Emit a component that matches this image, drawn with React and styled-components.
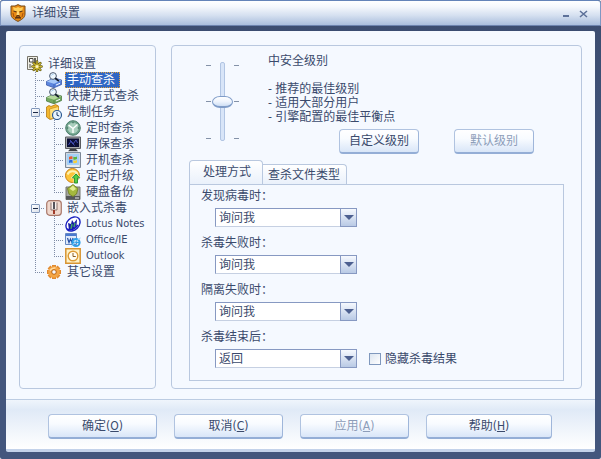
import { useState } from "react";
import styled, { createGlobalStyle, css } from "styled-components";

const GlobalStyle = createGlobalStyle`
	* {
		box-sizing: border-box;
	}

	body {
		margin: 0;
	}

	body, button, select, input {
		font-family: "DejaVu Sans Condensed", "Noto Sans CJK SC", sans-serif;
		font-size: 12px;
		line-height: 14px;
		color: #3a4a6c;
	}
`;

const Window = styled.div`
	display: flex;
	flex-direction: column;
	min-height: 100vh;
	background: linear-gradient(#3a4b6e, #43567d 40%);
	border-radius: 3px 3px 2px 2px;
	overflow: hidden;
`;

const TitleBar = styled.header`
	display: flex;
	align-items: center;
	height: 26px;
	padding: 0 10px 0 9px;
	gap: 6px;
	border: 1px solid #7f97c2;
	border-top-color: #6483b8;
	border-bottom-color: #6c83ae;
	border-radius: 3px 3px 0 0;
	background: linear-gradient(#ffffff 0%, #f4f7fc 25%, #d5e0f0 60%, #a9bddc 100%);
`;

const Title = styled.h1`
	flex: 1;
	margin: 0;
	font-size: 12px;
	font-weight: normal;
`;

const WindowButton = styled.button`
	display: flex;
	width: 12px;
	height: 12px;
	padding: 0;
	border: 0;
	background: none;
`;

const Body = styled.div`
	flex: 1;
	display: flex;
	flex-direction: column;
	margin: 5px 6px 7px;
	border-bottom: 3px solid #c3d2ea;
	border-radius: 2px;
	background: #f5f9ff;
`;

const Main = styled.main`
	flex: 1;
	display: grid;
	grid-template-columns: 137px 1fr;
	gap: 15px;
	padding: 14px 13px 10px;
`;

const Panel = styled.section`
	display: flex;
	flex-direction: column;
	border: 1px solid #b9c8df;
	border-radius: 4px;
`;

const Tree = styled.ul`
	margin: 0;
	padding: 10px 0 0 6px;
	list-style: none;
`;

const TreeRow = styled.li`
	display: flex;
	align-items: center;
	height: 16px;
`;

const dots = dir => `repeating-linear-gradient(${dir}, #7f8ca6 0 1px, transparent 1px 2px)`;

const guides = {
	line: css`
		background: ${dots("to bottom")} 9px 0 / 1px 16px no-repeat;
	`,
	tee: css`
		background: ${dots("to bottom")} 9px 0 / 1px 16px no-repeat,
			${dots("to right")} 9px 8px / 10px 1px no-repeat;
	`,
	end: css`
		background: ${dots("to bottom")} 9px 0 / 1px 8px no-repeat,
			${dots("to right")} 9px 8px / 10px 1px no-repeat;
	`,
};

const Guide = styled.span`
	display: flex;
	align-items: center;
	justify-content: center;
	width: 19px;
	height: 16px;
	${({ $kind }) => guides[$kind]}
`;

const Expander = styled.button`
	display: flex;
	align-items: center;
	justify-content: center;
	width: 9px;
	height: 9px;
	padding: 0;
	border: 1px solid #8298bb;
	border-radius: 1px;
	background: linear-gradient(135deg, #ffffff, #d9e0ea);

	&::after {
		content: "";
		width: 5px;
		height: 1px;
		background: #1c2a48;
	}
`;

const TreeIcon = styled.svg`
	width: 16px;
	height: 16px;
	margin: 0 3px 0 1px;
	flex: none;
`;

const TreeLabel = styled.button`
	height: 16px;
	padding: 0 4px 0 1px;
	border: 1px dotted transparent;
	background: none;
	line-height: 14px;
	white-space: nowrap;
	${({ $latin }) => $latin && "font-size: 11px;"}
	${({ $selected }) =>
		$selected &&
		css`
			border-color: #e0a040;
			background: #2f66c4;
			color: #ffffff;
		`}
`;

const LevelArea = styled.div`
	display: flex;
	padding: 8px 47px 0 34px;
	gap: 29px;
`;

const SliderBox = styled.div`
	display: flex;
	align-items: center;
	height: 79px;
	margin-top: 8px;
	gap: 4px;
`;

const Ticks = styled.div`
	display: flex;
	flex-direction: column;
	justify-content: space-between;
	height: 74px;
`;

const Tick = styled.span`
	width: 5px;
	height: 1px;
	background: #8492a8;
`;

const LevelSlider = styled.input`
	appearance: none;
	writing-mode: vertical-lr;
	width: 21px;
	height: 79px;
	margin: 0 -3px;
	background: none;

	&::-webkit-slider-runnable-track {
		width: 5px;
		height: 79px;
		border: 1px solid #b1c5e3;
		border-radius: 2px;
		background: #d8e5f8;
	}

	&::-webkit-slider-thumb {
		appearance: none;
		width: 21px;
		height: 12px;
		margin-left: -9px;
		border: 1px solid #7f9cc8;
		border-bottom-width: 2px;
		border-radius: 8px / 6px;
		background: linear-gradient(#ffffff, #eef4fd 50%, #cfdff4);
	}
`;

const LevelInfo = styled.div`
	flex: 1;
	display: flex;
	flex-direction: column;
`;

const LevelName = styled.h2`
	margin: 0 0 14px;
	font-size: 12px;
	font-weight: normal;
`;

const LevelNotes = styled.ul`
	margin: 0;
	padding: 0;
	list-style: none;
`;

const Button = styled.button`
	width: ${({ $width }) => $width || 80}px;
	height: 25px;
	padding: 0;
	border: 1px solid #b0c3e0;
	border-bottom: 2px solid #94aed6;
	border-right-color: #9fb6da;
	border-radius: 4px;
	background: linear-gradient(#ffffff 0%, #f8fbff 40%, #d9e6f8 100%);

	&:disabled {
		color: #8d9db9;
	}
`;

const LevelButtons = styled.div`
	display: flex;
	justify-content: flex-end;
	margin-top: 5px;
	gap: 35px;
`;

const TabArea = styled.div`
	flex: 1;
	display: flex;
	flex-direction: column;
	margin: 6px 17px 7px;
`;

const TabList = styled.div`
	display: flex;
	align-items: flex-end;
	height: 24px;
`;

const Tab = styled.button`
	height: 20px;
	padding: 0 6px 0 5px;
	border: 1px solid #b9c8df;
	border-bottom: 0;
	border-left: 0;
	border-radius: 0 4px 0 0;
	background: linear-gradient(#ffffff, #eaf1fb);
	${({ $active }) =>
		$active &&
		css`
			height: 24px;
			padding: 0 11px 2px 13px;
			border-left: 1px solid #b9c8df;
			border-radius: 4px 4px 0 0;
		`}
`;

const TabPanel = styled.div`
	flex: 1;
	padding: 4px 11px 12px;
	border: 1px solid #b9c8df;
`;

const Field = styled.div`
	display: flex;
	flex-direction: column;
	gap: 5px;
	margin-bottom: 9px;

	&:last-child {
		margin-bottom: 0;
	}
`;

const FieldRow = styled.div`
	display: flex;
	align-items: center;
	gap: 12px;
	margin-left: 14px;
`;

const SelectBox = styled.div`
	display: grid;
	grid-template-columns: 1fr 17px;
	width: 142px;
	height: 19px;
`;

const Select = styled.select`
	appearance: none;
	grid-area: 1 / 1 / 2 / 3;
	padding: 0 20px 0 3px;
	border: 1px solid #8799c2;
	border-bottom-color: #c6d0e2;
	border-radius: 0;
	background: #ffffff;
`;

const SelectArrow = styled.span`
	grid-area: 1 / 2 / 2 / 3;
	display: flex;
	align-items: center;
	justify-content: center;
	border: 1px solid #8799c2;
	background: linear-gradient(#f6f9fe, #b9cae5);
	pointer-events: none;

	&::after {
		content: "";
		border: 5px solid transparent;
		border-top-color: #4d6090;
		border-bottom: 0;
	}
`;

const CheckLabel = styled.label`
	display: flex;
	align-items: center;
	gap: 4px;
`;

const Checkbox = styled.input`
	appearance: none;
	width: 12px;
	height: 12px;
	margin: 0;
	border: 1px solid #7f98bd;
	background: linear-gradient(135deg, #dce5f0, #ffffff);

	&:checked {
		background: #5f7db0;
	}
`;

const Footer = styled.footer`
	display: flex;
	justify-content: center;
	gap: 17px;
	padding: 14px 14px 10px 13px;
	border-top: 1px solid #bccce2;
	background: linear-gradient(#eff5fc, #e0eaf7 20%, #ffffff);
`;

const ShieldLogo = () => (
	<svg width="16" height="18" viewBox="0 0 16 18" aria-hidden="true">
		<path d="M1 2 L5 2 L8 .6 L11 2 L15 2 V10 C15 14 11 16 8 17.4 C5 16 1 14 1 10 Z" fill="#e78a14" stroke="#774a18" />
		<path d="M3 3 L6 4 L8 3 L10 4 L13 3 L12 8 L10 7 L8 8.500 L6 7 L4 8 Z" fill="#ffcf58" />
		<path d="M3.500 7 L6.500 8 M9.500 8 L12.500 7 M6 12.500 L8 11.500 L10 12.500 M5 14 L8 13.500 L11 14" stroke="#5b3211" strokeWidth="1.300" fill="none" />
		<path d="M7 8 H9 L9.500 11 H6.500 Z" fill="#ffd978" />
		<path d="M3 9 L4 13 M13 9 L12 13" stroke="#a7500e" />
	</svg>
);

const Disk = ({ light, mid, dark }) => (
	<>
		<path d="M.4 9.500 L8 6 L15.600 8 V12.500 L8 15.800 L.4 13 Z" fill={mid} stroke={dark} strokeWidth=".7" />
		<path d="M.7 9.500 L8 6.300 L15.300 8.200 L8 11.800 Z" fill={light} />
		<path d="M8 12 V15.300" stroke={dark} strokeWidth=".6" />
		<path d="M10 13 L14 11.300" stroke="#f5faff" />
		<circle cx="7" cy="4" r="3.400" fill="#eef8ff" stroke="#4d5b72" />
		<path d="M5.200 3.600 Q6 2.200 7.500 2.200" stroke="#9fc9ef" fill="none" />
		<path d="M9.500 6.500 L12.500 8.700" stroke="#18202f" strokeWidth="1.700" strokeLinecap="round" />
	</>
);

const icons = {
	settings: (
		<>
			<path d="M.5 .5 H10.500 V13.500 H.5 Z" fill="#f0efe6" stroke="#77746a" />
			<path d="M2.500 2.500 H6 V6 H2.500 Z M3 8 V12" fill="#ffffff" stroke="#4a4a45" />
			<path d="M8 2 V7" stroke="#33332d" strokeWidth="1.500" />
			<g stroke="#5c5412" strokeWidth="2.600" strokeLinecap="round">
				<path d="M10 5.500 V15 M5.500 10.500 H14.500 M6.700 7.200 L13.300 13.800 M13.300 7.200 L6.700 13.800" />
			</g>
			<g stroke="#c9b52e" strokeWidth="1.400" strokeLinecap="round">
				<path d="M10 5.500 V15 M5.500 10.500 H14.500 M6.700 7.200 L13.300 13.800 M13.300 7.200 L6.700 13.800" />
			</g>
			<circle cx="10" cy="10.500" r="1.500" fill="#fbf5c3" />
		</>
	),
	manual: <Disk light="#a6c8f8" mid="#5c86de" dark="#2c4a9e" />,
	quick: <Disk light="#b4d89c" mid="#72a860" dark="#3c6d34" />,
	tasks: (
		<>
			<path d="M.5 3 L3 1.500 L5 2.500 L9.500 .6 L12.500 2 V13 L4 15.500 L.5 13 Z" fill="#f4b72e" stroke="#b47a12" strokeWidth=".8" />
			<path d="M3.500 5 L12.500 2.500 V12.500 L4 15.200 Z" fill="#ffe07a" stroke="#c78d1b" strokeWidth=".7" />
			<circle cx="11" cy="11" r="4.500" fill="#e7f4ff" stroke="#2d5a94" strokeWidth="1.200" />
			<path d="M11 8.200 V11.200 L13.200 12" stroke="#1f3b66" fill="none" />
		</>
	),
	timed: (
		<>
			<circle cx="8" cy="8" r="7.300" fill="#72a58e" stroke="#4c7e6b" />
			<circle cx="8" cy="8" r="5.400" fill="#a9cfbd" />
			<path d="M8 8.500 L3.500 5 M8 8.500 L12.500 4.500 M8 8.500 V13" stroke="#ffffff" strokeWidth="1.400" />
			<path d="M8 1.800 V3.300 M14.200 8 H12.700 M3.300 8 H1.800" stroke="#2e5c4c" />
		</>
	),
	screen: (
		<>
			<path d="M.5 1 H15.500 V12.500 H.5 Z" fill="#a7a9ac" stroke="#5a5c60" />
			<path d="M2 2.500 H14 V11 H2 Z" fill="#0b0e35" />
			<path d="M3.500 9 L6 5 L8 8 L11 4 L12.500 7 M5 4 L9.500 9.500" stroke="#4450b8" fill="none" />
			<path d="M5 13 H11 L13 15.300 H3 Z" fill="#3f4146" />
		</>
	),
	boot: (
		<>
			<path d="M.5 .5 H15.500 V15.500 H.5 Z" fill="#cfd8e2" stroke="#7b8796" />
			<path d="M2 2 H14 V13 H2 Z" fill="#a5d0f6" />
			<path d="M4 5 Q6 3.500 7.500 4.600 V7.300 Q6 6.500 4 7.700 Z" fill="#ea5b2e" />
			<path d="M8.300 4.800 Q10 5.500 12 4.400 V7 Q10 8.200 8.300 7.500 Z" fill="#5cb53c" />
			<path d="M4 8.500 Q6 7.300 7.500 8.200 V11 Q6 10 4 11 Z" fill="#2d68d4" />
			<path d="M8.300 8.300 Q10 9.200 12 8 V10.500 Q10 11.800 8.300 11 Z" fill="#f8cf37" />
			<path d="M2 14 H14" stroke="#ffffff" />
		</>
	),
	upgrade: (
		<>
			<circle cx="7.500" cy="7.500" r="7" fill="#fcc43a" stroke="#c97f11" />
			<path d="M2.500 6.500 A5.500 5 0 0 1 12.500 6" stroke="#fff2b0" strokeWidth="2" fill="none" />
			<path d="M11 5 L15.700 10 H13 V15.500 H9 V10 H6.300 Z" fill="#58cf43" stroke="#ffffff" strokeWidth=".6" />
			<path d="M11 6 L14.500 10 H12.500 V15 H9.500 V10 H7.500 Z" stroke="#218326" strokeWidth=".8" fill="none" />
		</>
	),
	backup: (
		<>
			<path d="M1 3 H15 V15.500 H1 Z" fill="#a3a59f" stroke="#74766f" />
			<path d="M1 12 L15 12 V15.500 H1 Z" fill="#55575a" />
			<path d="M10 14 H14" stroke="#e7e9ec" />
			<path d="M8 .5 L13 4.500 L11.500 10 L8 12.500 L4 10 L2.500 4.500 Z" fill="#a4b83e" stroke="#6d7c20" strokeWidth=".8" />
			<path d="M8 1.500 L11 5 L8 7 L4.500 4.800 Z" fill="#e3ed93" />
		</>
	),
	embedded: (
		<>
			<rect x=".7" y=".7" width="14.600" height="14.600" rx="3" fill="#f0d8cd" stroke="#a9786a" strokeWidth="1.200" />
			<path d="M5 2.500 V10 H11 V2.500" fill="#faf2ee" stroke="#8d736c" />
			<path d="M8 2 V9" stroke="#55535a" strokeWidth="2" />
			<path d="M8 10 V14" stroke="#a03a2a" strokeWidth="2" />
		</>
	),
	lotus: (
		<>
			<ellipse cx="8" cy="8" rx="8" ry="6" transform="rotate(-45 8 8)" fill="#ffffff" stroke="#1b22bf" strokeWidth="1.400" />
			<path d="M3 7 L6 8 L7 4 L9 7 L12 3 L11.500 10 L8 13 L4 14 Z" fill="#171da8" />
			<path d="M6 13 L7 8 M9 11 L10 7" stroke="#42a36c" strokeWidth="1.500" />
			<path d="M2 13 Q7 16 13 9" stroke="#1717c5" strokeWidth="1.600" fill="none" />
		</>
	),
	office: (
		<>
			<path d="M.5 1.500 H11.500 V12.500 H.5 Z" fill="#dfeafa" stroke="#6688c2" />
			<path d="M1 2 H11 V4 H1 Z" fill="#4a79cf" />
			<path d="M2.500 6 L4 10.500 L5.500 7 L7 10.500 L8 6" stroke="#264fa4" strokeWidth="1.200" fill="none" />
			<circle cx="11" cy="10.500" r="3.600" fill="none" stroke="#2f9fe8" strokeWidth="2" />
			<path d="M8 10.500 H14" stroke="#2f9fe8" strokeWidth="1.500" />
			<path d="M6.500 14.500 Q10 9 15.500 6" stroke="#8fd0f7" fill="none" />
		</>
	),
	outlook: (
		<>
			<path d="M.8 .8 H15.200 V15.200 H.8 Z" fill="#fff3c8" stroke="#d79432" strokeWidth="1.500" />
			<circle cx="8" cy="8" r="4.800" fill="#fffdf2" stroke="#dc9a35" strokeWidth="1.400" />
			<path d="M8 5 V8.500 H10.800" stroke="#8c5f26" fill="none" />
		</>
	),
	other: (
		<>
			<g stroke="#e08a30" strokeWidth="4">
				<path d="M8 1 V15 M1 8 H15 M3 3 L13 13 M13 3 L3 13" />
			</g>
			<circle cx="8" cy="8" r="5.800" fill="#f4a544" />
			<path d="M4 6.500 Q6 3.500 9.500 4" stroke="#ffdba1" strokeWidth="1.400" fill="none" />
			<circle cx="8" cy="8" r="2.300" fill="#f5f9ff" stroke="#b96314" />
		</>
	),
};

const treeItems = [
	{ id: "settings", text: "详细设置", guides: [] },
	{ id: "manual", text: "手动查杀", guides: ["tee"] },
	{ id: "quick", text: "快捷方式查杀", guides: ["tee"] },
	{ id: "tasks", text: "定制任务", guides: ["tee"], group: true },
	{ id: "timed", text: "定时查杀", guides: ["line", "tee"] },
	{ id: "screen", text: "屏保查杀", guides: ["line", "tee"] },
	{ id: "boot", text: "开机查杀", guides: ["line", "tee"] },
	{ id: "upgrade", text: "定时升级", guides: ["line", "tee"] },
	{ id: "backup", text: "硬盘备份", guides: ["line", "end"] },
	{ id: "embedded", text: "嵌入式杀毒", guides: ["tee"], group: true },
	{ id: "lotus", text: "Lotus Notes", guides: ["line", "tee"], latin: true },
	{ id: "office", text: "Office/IE", guides: ["line", "tee"], latin: true },
	{ id: "outlook", text: "Outlook", guides: ["line", "end"], latin: true },
	{ id: "other", text: "其它设置", guides: ["end"] },
];

const fields = [
	{ id: "found", label: "发现病毒时：", value: "询问我" },
	{ id: "killFailed", label: "杀毒失败时：", value: "询问我" },
	{ id: "isolateFailed", label: "隔离失败时：", value: "询问我" },
	{ id: "finished", label: "杀毒结束后：", value: "返回", hideOption: true },
];

const footerButtons = [
	{ text: "确定", hotkey: "O", width: 109 },
	{ text: "取消", hotkey: "C", width: 109 },
	{ text: "应用", hotkey: "A", width: 109, disabled: true },
	{ text: "帮助", hotkey: "H", width: 126 },
];

const SettingsTree = () => {
	const [selected, setSelected] = useState("manual");

	return (
		<Tree>
			{treeItems.map(item => (
				<TreeRow key={item.id}>
					{item.guides.map((kind, i) => (
						<Guide key={i} $kind={kind}>
							{item.group && <Expander type="button" aria-label={item.text} aria-expanded="true" />}
						</Guide>
					))}
					<TreeIcon viewBox="0 0 16 16" aria-hidden="true">
						{icons[item.id]}
					</TreeIcon>
					<TreeLabel
						type="button"
						$latin={item.latin}
						$selected={selected === item.id}
						onClick={() => setSelected(item.id)}
					>
						{item.text}
					</TreeLabel>
				</TreeRow>
			))}
		</Tree>
	);
};

const TickColumn = () => (
	<Ticks>
		<Tick />
		<Tick />
		<Tick />
	</Ticks>
);

const SecurityLevel = () => (
	<LevelArea>
		<SliderBox>
			<TickColumn />
			<LevelSlider type="range" min="0" max="2" defaultValue="1" aria-label="安全级别" />
			<TickColumn />
		</SliderBox>
		<LevelInfo>
			<LevelName>中安全级别</LevelName>
			<LevelNotes>
				<li>- 推荐的最佳级别</li>
				<li>- 适用大部分用户</li>
				<li>- 引擎配置的最佳平衡点</li>
			</LevelNotes>
			<LevelButtons>
				<Button type="button">自定义级别</Button>
				<Button type="button" disabled>
					默认级别
				</Button>
			</LevelButtons>
		</LevelInfo>
	</LevelArea>
);

const ActionField = ({ field }) => (
	<Field>
		<label htmlFor={field.id}>{field.label}</label>
		<FieldRow>
			<SelectBox>
				<Select id={field.id} defaultValue={field.value}>
					<option>{field.value}</option>
				</Select>
				<SelectArrow />
			</SelectBox>
			{field.hideOption && (
				<CheckLabel>
					<Checkbox type="checkbox" />
					隐藏杀毒结果
				</CheckLabel>
			)}
		</FieldRow>
	</Field>
);

const App = () => {
	return (
		<>
			<GlobalStyle />
			<Window>
				<TitleBar>
					<ShieldLogo />
					<Title>详细设置</Title>
					<WindowButton type="button" aria-label="最小化">
						<svg width="12" height="12" viewBox="0 0 12 12">
							<path d="M3 9 H9" stroke="#5d7199" strokeWidth="2" />
						</svg>
					</WindowButton>
					<WindowButton type="button" aria-label="关闭">
						<svg width="12" height="12" viewBox="0 0 12 12">
							<path d="M2 4 L9 10 M9 4 L2 10" stroke="#5d7199" strokeWidth="1.600" />
						</svg>
					</WindowButton>
				</TitleBar>
				<Body>
					<Main>
						<Panel>
							<SettingsTree />
						</Panel>
						<Panel>
							<SecurityLevel />
							<TabArea>
								<TabList role="tablist">
									<Tab type="button" role="tab" aria-selected="true" $active>
										处理方式
									</Tab>
									<Tab type="button" role="tab" aria-selected="false">
										查杀文件类型
									</Tab>
								</TabList>
								<TabPanel role="tabpanel">
									{fields.map(field => (
										<ActionField key={field.id} field={field} />
									))}
								</TabPanel>
							</TabArea>
						</Panel>
					</Main>
					<Footer>
						{footerButtons.map(({ text, hotkey, width, disabled }) => (
							<Button key={hotkey} type="button" $width={width} disabled={disabled}>
								{text}(<u>{hotkey}</u>)
							</Button>
						))}
					</Footer>
				</Body>
			</Window>
		</>
	);
};

export default App;
